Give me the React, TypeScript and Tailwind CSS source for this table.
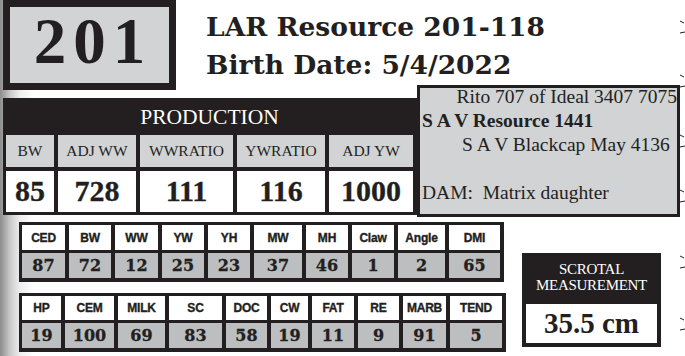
import React from 'react';

const serif = '"Liberation Serif", "Times New Roman", serif';
const slab = '"DejaVu Serif", Georgia, serif';
const sans = '"Liberation Sans", Arial, sans-serif';

const production = [
  { label: 'BW', value: '85' },
  { label: 'ADJ WW', value: '728' },
  { label: 'WWRATIO', value: '111' },
  { label: 'YWRATIO', value: '116' },
  { label: 'ADJ YW', value: '1000' },
];

const epdTop = [
  ['CED', '87', 43],
  ['BW', '72', 42],
  ['WW', '12', 43],
  ['YW', '25', 42],
  ['YH', '23', 42],
  ['MW', '37', 48],
  ['MH', '46', 42],
  ['Claw', '1', 42],
  ['Angle', '2', 47],
  ['DMI', '65', 51],
] as const;

const epdBottom = [
  ['HP', '19', 39],
  ['CEM', '100', 49],
  ['MILK', '69', 47],
  ['SC', '83', 53],
  ['DOC', '58', 41],
  ['CW', '19', 37],
  ['FAT', '11', 42],
  ['RE', '9', 41],
  ['MARB', '91', 43],
  ['TEND', '5', 52],
] as const;

type Row = readonly (readonly [string, string, number])[];

function EpdTable({ rows, className, header, value }: { rows: Row; className: string; header: string; value: string }) {
  return (
    <div className={`bg-[#231f20] pt-[3px] pl-[3px] pr-[4px] pb-[4px] ${className}`}>
      <div className="flex gap-x-[4px]">
        {rows.map(([label, , w]) => (
          <div
            key={label}
            style={{ width: w, fontFamily: sans }}
            className={`${header} bg-white flex items-center justify-center text-[12px] font-bold text-[#231f20] tracking-[-0.2px] [-webkit-text-stroke:0.35px_#231f20]`}
          >
            {label}
          </div>
        ))}
      </div>
      <div className="flex gap-x-[4px] mt-[3px]">
        {rows.map(([label, v, w]) => (
          <div
            key={label}
            style={{ width: w, fontFamily: slab }}
            className={`${value} bg-[#bcbec0] flex items-center justify-center text-[16px] font-bold text-[#231f20] [-webkit-text-stroke:0.3px_#231f20]`}
          >
            {v}
          </div>
        ))}
      </div>
    </div>
  );
}

export default function App() {
  return (
    <div className="relative w-[685px] h-[356px] overflow-hidden bg-[linear-gradient(to_right,#8c8c8c_0px,#c9c9c9_10px,#eeeeee_20px,#ffffff_34px)] text-[#231f20]">
      {/* top: tag number + name */}
      <div className="flex pl-[3px]">
        <div className="w-[173px] h-[90px] border-[7px] border-[#231f20] bg-[#d1d3d4] flex justify-center pt-[2px]">
          <span style={{ fontFamily: serif }} className="text-[65px] font-bold leading-none tracking-[7px] pl-[7px]">
            201
          </span>
        </div>
        <div style={{ fontFamily: slab }} className="ml-[30px] mt-[8px] text-[26.5px] font-bold leading-[38px]">
          <div>LAR Resource 201-118</div>
          <div>Birth Date: 5/4/2022</div>
        </div>
      </div>

      {/* production + pedigree */}
      <div className="flex -mt-[5px] pl-[3px]">
        <div className="w-[414px] h-[117px] mt-[13px] bg-[#231f20] pl-[3px] pr-[4px] pb-[3px]">
          <div style={{ fontFamily: serif }} className="h-[37px] flex items-center justify-center text-white text-[21.5px] pt-[1px]">
            PRODUCTION
          </div>
          <div className="grid grid-cols-[48px_78px_93px_88px_84px] grid-rows-[32px_41px] gap-[4px]">
            {production.map((p) => (
              <div key={p.label} style={{ fontFamily: serif }} className="bg-[#d1d3d4] flex items-center justify-center text-[15.5px]">
                {p.label}
              </div>
            ))}
            {production.map((p) => (
              <div key={p.label} style={{ fontFamily: serif }} className="bg-white flex items-center justify-center text-[30px] font-bold pb-[2px] [-webkit-text-stroke:0.3px_#231f20]">
                {p.value}
              </div>
            ))}
          </div>
        </div>

        <div style={{ fontFamily: serif }} className="w-[263px] h-[132px] border-[3px] border-[#231f20] bg-[#d1d3d4] text-[19.5px] leading-[24px] whitespace-pre">
          <div className="-mt-[3px]">
            <div className="text-right">Rito 707 of Ideal 3407 7075</div>
            <div className="font-bold pl-[2px]">S A V Resource 1441</div>
            <div className="pl-[42px]">S A V Blackcap May 4136</div>
            <div>&nbsp;</div>
            <div className="pl-[2px]">DAM:  Matrix daughter</div>
          </div>
        </div>
      </div>

      {/* EPD tables + scrotal */}
      <div className="flex mt-[5px] pl-[19px]">
        <div className="w-[487px] flex flex-col gap-[11px]">
          <EpdTable rows={epdTop} className="w-[485px]" header="h-[25px]" value="h-[25px]" />
          <EpdTable rows={epdBottom} className="w-[487px]" header="h-[24px]" value="h-[25px]" />
        </div>

        <div className="ml-[16px] mt-[31px] w-[139px] border-[4px] border-[#231f20] h-[94px] flex flex-col">
          <div style={{ fontFamily: serif }} className="h-[47px] bg-[#231f20] text-white text-center text-[15px] leading-[16px] tracking-[-0.3px] pt-[4px]">
            SCROTAL
            <br />
            MEASUREMENT
          </div>
          <div style={{ fontFamily: serif }} className="flex-1 bg-white flex items-center justify-center text-[29px] font-bold leading-none">
            35.5 cm
          </div>
        </div>
      </div>

      {/* pedigree bracket stubs at the right edge */}
      <svg className="absolute right-0 top-0" width="6" height="356" viewBox="0 0 6 356">
        <g stroke="#231f20" strokeWidth="1" fill="none">
          {[23, 77, 137, 192, 258, 320].map((y) => (
            <g key={y}>
              <path d={`M1 ${y - 2} L5 ${y}`} />
              <path d={`M1 ${y + 10} L6 ${y + 9}`} />
            </g>
          ))}
        </g>
      </svg>
    </div>
  );
}
